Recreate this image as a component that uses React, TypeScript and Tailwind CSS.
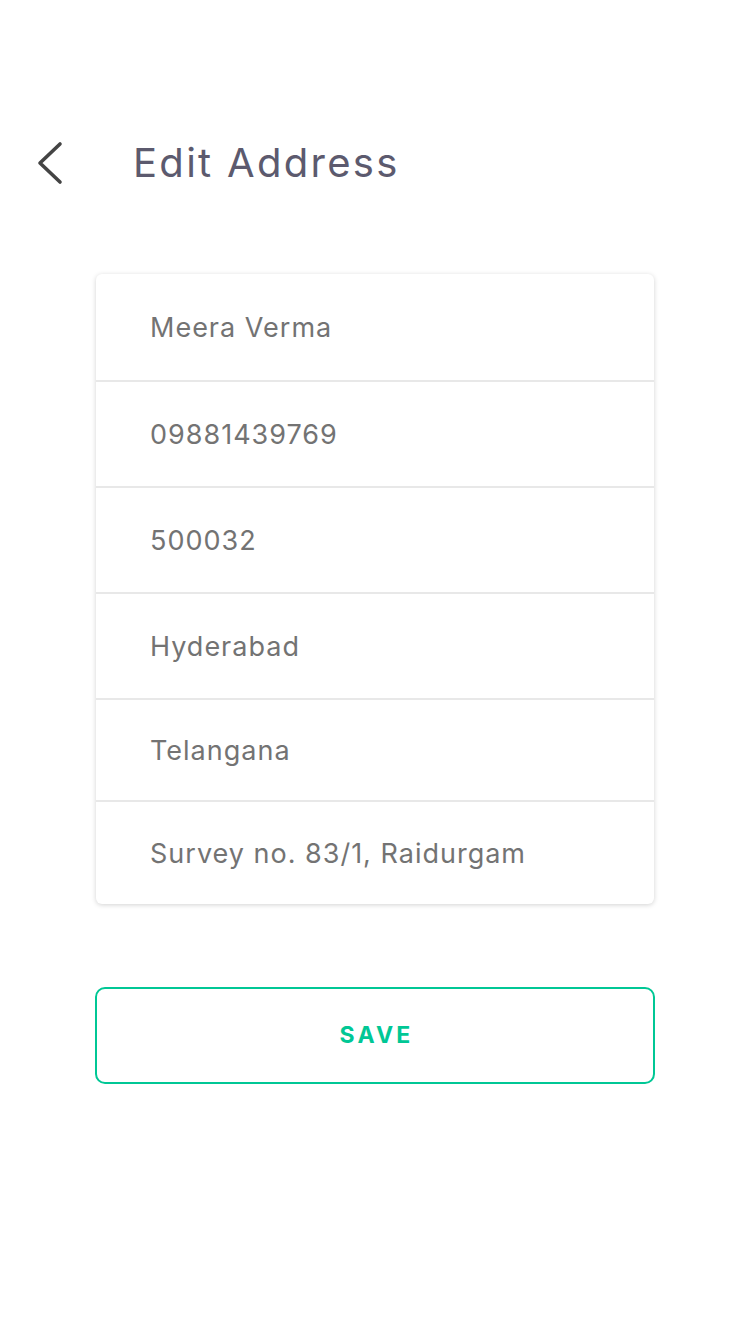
const rows = [
  { text: 'Meera Verma', h: 'h-[108px]' },
  { text: '09881439769', h: 'h-[106px]' },
  { text: '500032', h: 'h-[106px]' },
  { text: 'Hyderabad', h: 'h-[106px]' },
  { text: 'Telangana', h: 'h-[102px]' },
  { text: 'Survey no. 83/1, Raidurgam', h: 'h-[102px]' },
];

export default function App() {
  return (
    <div
      className="w-[750px] h-[1334px] bg-white"
      style={{ fontFamily: 'Inter, "Open Sans", sans-serif' }}
    >
      {/* Header */}
      <div className="flex items-center pt-[140px] h-[186px]">
        <button type="button" aria-label="Back" className="ml-[36px] w-[28px] h-[44px] flex items-center">
          <svg width="28" height="44" viewBox="0 0 28 44" fill="none" stroke="#444444" strokeWidth="3.6" strokeLinecap="round" strokeLinejoin="round">
            <polyline points="24,3 4,22 24,41" />
          </svg>
        </button>
        <h1 className="ml-[69px] text-[40px] font-normal tracking-[2.3px] text-[#5c5a6e] leading-none">
          Edit Address
        </h1>
      </div>

      {/* Address card */}
      <div className="mt-[88px] mx-[96px] w-[558px] bg-white rounded-[6px] shadow-[0_1px_5px_rgba(0,0,0,0.18)]">
        {rows.map((r, i) => (
          <div
            key={r.text}
            className={`flex items-center pl-[54px] ${r.h} ${i < rows.length - 1 ? 'border-b-2 border-[#e8e8e8]' : ''}`}
          >
            <span className="text-[27px] tracking-[1px] text-[#737373] leading-none">{r.text}</span>
          </div>
        ))}
      </div>

      {/* Save */}
      <div className="mt-[83px] mx-[95px]">
        <button
          type="button"
          className="w-[560px] h-[97px] border-2 border-[#00c795] rounded-[10px] flex items-center justify-center pl-[3px] text-[23px] font-bold tracking-[3.2px] text-[#00c795]"
        >
          SAVE
        </button>
      </div>
    </div>
  );
}
